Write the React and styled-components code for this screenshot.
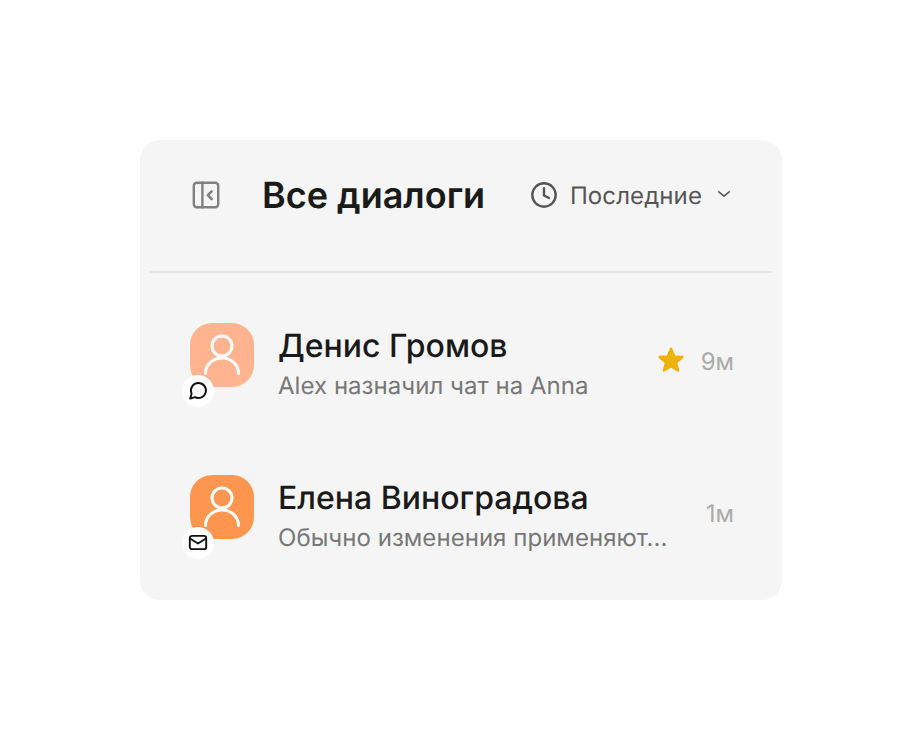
import React from "react";
import styled, { createGlobalStyle } from "styled-components";

const Global = createGlobalStyle`
  html, body { margin: 0; padding: 0; background: #fff; }
  body { font-family: Inter, "Liberation Sans", sans-serif; text-rendering: geometricPrecision; }
`;
const Page = styled.div`
  width: 922px; height: 740px; padding: 140px 140px; box-sizing: border-box;
`;
const Card = styled.section`
  width: 642px; height: 460px; box-sizing: border-box;
  background: #f5f5f5; border-radius: 20px; padding: 0 10px;
`;
const Header = styled.header`
  height: 133px; box-sizing: border-box;
  display: flex; align-items: flex-start; padding: 39px 40px 0 40px;
  border-bottom: 2px solid #e6e6e6;
`;
const ToggleIcon = styled.svg`
  width: 32px; height: 32px; flex: none;
`;
const Title = styled.h1`
  margin: 0 0 0 40px; font-size: 36px; line-height: 32px; font-weight: 600; color: #1a1a1a;
  white-space: nowrap; flex: 1;
`;
const Sort = styled.div`
  display: flex; align-items: center; height: 32px; color: #555; font-size: 24px; white-space: nowrap;
`;
const SortLabel = styled.span`
  margin: 0 14px 0 12px; letter-spacing: 0.1px;
`;
const Row = styled.article`
  height: 152px; display: flex; align-items: flex-start; box-sizing: border-box;
  padding: 50px 38px 0 40px;
`;
const AvatarWrap = styled.div`
  position: relative; width: 64px; height: 64px; flex: none;
`;
const Avatar = styled.div`
  width: 64px; height: 64px; border-radius: 22px; background: ${p => p.$color};
  display: flex; align-items: center; justify-content: center;
`;
const Badge = styled.div`
  position: absolute; left: -8px; top: 52px; width: 32px; height: 32px; border-radius: 50%;
  background: #fff; display: flex; align-items: center; justify-content: center;
`;
const Body = styled.div`
  margin-left: 24px; flex: 1; min-width: 0; display: flex; flex-direction: column; padding-top: 1px;
`;
const Name = styled.div`
  font-size: 32px; line-height: 44px; font-weight: 500; color: #1a1a1a; white-space: nowrap;
`;
const Preview = styled.div`
  font-size: 24px; line-height: 36px; color: #777; white-space: nowrap; letter-spacing: 0.04px;
`;
const Meta = styled.div`
  display: flex; align-items: center; height: 76px; color: #aaa; font-size: 24px; flex: none;
`;
const Star = styled.svg`
  width: 28px; height: 28px; margin-right: 16px;
`;

const AvatarIcon = () => (
  <svg width="40" height="42" viewBox="0 0 40 42" fill="none" stroke="#fff" strokeWidth="3" strokeLinecap="round">
    <circle cx="20" cy="12" r="10" />
    <path d="M3.5 39.5c0-9 7.4-15.5 16.5-15.5s16.5 6.5 16.5 15.5" />
  </svg>
);
const Chat = () => (
  <svg width="20" height="20" viewBox="0 0 20 20" fill="none" stroke="#111" strokeWidth="1.9" strokeLinejoin="round">
    <path d="M10.5 2a7.5 7.5 0 1 1-3.6 14.1L2.2 17.6l1.4-4.9A7.5 7.5 0 0 1 10.5 2z" />
  </svg>
);
const Mail = () => (
  <svg width="20" height="18" viewBox="0 0 20 18" fill="none" stroke="#111" strokeWidth="1.9" strokeLinejoin="round" strokeLinecap="round">
    <rect x="1.8" y="1.9" width="16.4" height="13.2" rx="2.2" />
    <path d="M2 4.5l8 5 8-5" />
  </svg>
);

const rows = [
  { name: "Денис Громов", text: "Alex назначил чат на Anna", color: "#ffb38e", icon: <Chat />, time: "9м", star: true },
  { name: "Елена Виноградова", text: "Обычно изменения применяют...", color: "#ff964f", icon: <Mail />, time: "1м" },
];

export default function App() {
  return (
    <Page>
      <Global />
      <Card>
        <Header>
          <ToggleIcon viewBox="0 0 32 32" fill="none" stroke="#808080" strokeWidth="2.4" strokeLinecap="round" strokeLinejoin="round">
            <rect x="3.8" y="3.8" width="24.4" height="24.4" rx="3" />
            <path d="M12.4 3.8v24.4" />
            <path d="M21.6 12.4l-3.7 3.8 3.7 3.8" strokeWidth="2.6" />
          </ToggleIcon>
          <Title>Все диалоги</Title>
          <Sort>
            <svg width="28" height="28" viewBox="0 0 28 28" fill="none" stroke="#555" strokeWidth="2.4" strokeLinecap="round" strokeLinejoin="round">
              <circle cx="14" cy="14" r="11.7" />
              <path d="M14 7.2v7.3l5 2.5" />
            </svg>
            <SortLabel>Последние</SortLabel>
            <svg width="16" height="16" viewBox="0 0 16 16" fill="none" stroke="#555" strokeWidth="1.6" strokeLinecap="round" strokeLinejoin="round">
              <path d="M2.8 4.8l5.2 4.4 5.2-4.4" />
            </svg>
          </Sort>
        </Header>
        {rows.map(r => (
          <Row key={r.name}>
            <AvatarWrap>
              <Avatar $color={r.color}><AvatarIcon /></Avatar>
              <Badge>{r.icon}</Badge>
            </AvatarWrap>
            <Body>
              <Name>{r.name}</Name>
              <Preview>{r.text}</Preview>
            </Body>
            <Meta>
              {r.star && (
                <Star viewBox="0 0 28 28">
                  <path d="M14 1.7l3.2 7.7 8.3.66-6.4 5.44 2 8.1L14 19.2l-7.1 4.4 2-8.1-6.4-5.44 8.3-.66z" fill="#edb20c" stroke="#edb20c" strokeWidth="2.4" strokeLinejoin="round" />
                </Star>
              )}
              {r.time}
            </Meta>
          </Row>
        ))}
      </Card>
    </Page>
  );
}
